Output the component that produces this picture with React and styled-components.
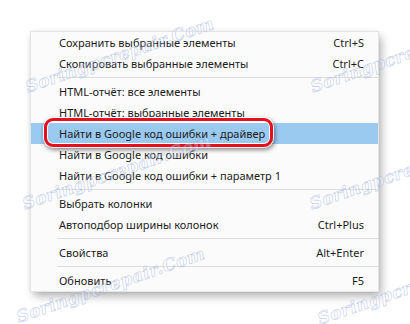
import React from "react";
import styled, { createGlobalStyle } from "styled-components";

const items = [
  { label: "Сохранить выбранные элементы", keys: "Ctrl+S" },
  { label: "Скопировать выбранные элементы", keys: "Ctrl+C" },
  { sep: true },
  { label: "HTML-отчёт: все элементы" },
  { label: "HTML-отчёт: выбранные элементы" },
  { label: "Найти в Google код ошибки + драйвер", active: true },
  { label: "Найти в Google код ошибки" },
  { label: "Найти в Google код ошибки + параметр 1" },
  { sep: true },
  { label: "Выбрать колонки" },
  { label: "Автоподбор ширины колонок", keys: "Ctrl+Plus" },
  { sep: true },
  { label: "Свойства", keys: "Alt+Enter" },
  { sep: true },
  { label: "Обновить", keys: "F5" },
];

// watermark start points (left end of the slanted text)
const marks = [
  { x: 26, y: 77 },
  { x: 311, y: 77 },
  { x: 23, y: 194 },
  { x: 310, y: 194 },
  { x: 17, y: 307 },
  { x: 318, y: 309 },
];

const App = () => {
  return (
    <>
      <GlobalStyle />
      <Stage>
        <Menu>
          {items.map((item, i) =>
            item.sep ? (
              <Separator key={i} />
            ) : (
              <Item key={i} $active={item.active}>
                <span>{item.label}</span>
                <Keys>{item.keys}</Keys>
              </Item>
            )
          )}
          <Callout />
        </Menu>
        {marks.map((m, i) => (
          <Watermark key={i} style={{ left: m.x, top: m.y }}>
            Soringpcrepair.Com
          </Watermark>
        ))}
      </Stage>
    </>
  );
};

const GlobalStyle = createGlobalStyle`
  html, body {
    margin: 0;
    background: #ffffff;
  }
  body {
    font-family: "Noto Sans", "Open Sans", sans-serif;
  }
`;

const Stage = styled.div`
  position: relative;
  width: 410px;
  height: 324px;
  overflow: hidden;
  padding: 32px 0 0 31px;
  box-sizing: border-box;
  background: #ffffff;
`;

const Menu = styled.div`
  position: relative;
  width: 347px;
  display: flex;
  flex-direction: column;
  background: #fbfbfb;
  box-shadow: 0 0 0 1px #e4e4e4, 3px 5px 9px rgba(0, 0, 0, 0.32),
    0 0 4px rgba(0, 0, 0, 0.1);
`;

const Item = styled.div`
  display: grid;
  grid-template-columns: 1fr auto;
  align-items: center;
  height: 21px;
  padding: 0 14px 0 28px;
  font-size: 11px;
  color: #1b1b1b;
  white-space: nowrap;
  background: ${(p) => (p.$active ? "#9bcaf1" : "transparent")};
`;

const Keys = styled.span`
  text-align: right;
`;

const Separator = styled.div`
  height: 7px;
  display: flex;
  align-items: center;
  padding-left: 26px;

  &::after {
    content: "";
    flex: 1;
    height: 1px;
    background: #dcdcdc;
  }
`;

const Callout = styled.div`
  position: absolute;
  left: 13px;
  top: 86px;
  width: 229px;
  height: 29px;
  box-sizing: border-box;
  border: 3.5px solid #e5101b;
  border-radius: 9px;
  box-shadow: inset 0 0 0 1px #ffffff, 0 0 0 1px rgba(255, 255, 255, 0.9),
    1px 2px 4px 1px rgba(0, 0, 0, 0.45);
`;

const Watermark = styled.span`
  position: absolute;
  font-family: "DejaVu Serif", serif;
  font-style: italic;
  font-weight: bold;
  font-size: 17px;
  line-height: 20px;
  letter-spacing: 0.4px;
  color: rgba(255, 255, 255, 0.25);
  -webkit-text-stroke: 0.7px rgba(135, 155, 215, 0.45);
  transform: rotate(-19deg);
  transform-origin: left center;
  white-space: nowrap;
  pointer-events: none;
`;

export default App;
